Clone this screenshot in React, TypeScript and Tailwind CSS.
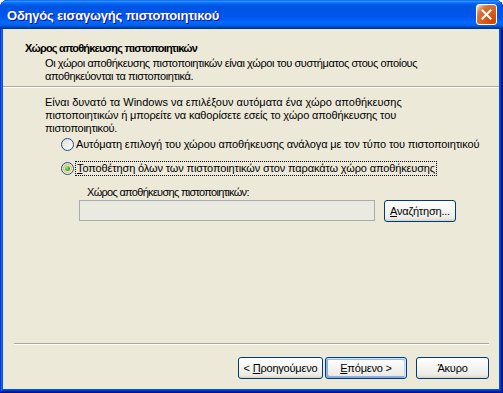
import React from "react";

const FONT = { fontFamily: '"Liberation Sans", Arial, sans-serif' };

function Radio({ checked }: { checked?: boolean }) {
  return (
    <div className="relative w-[13px] h-[13px] shrink-0 rounded-full border border-[#1c5180] bg-[linear-gradient(135deg,#dcdcd7_0%,#ffffff_100%)]">
      {checked && (
        <>
          <div className="absolute inset-[1px] rounded-full border border-[#f8b636]" />
          <div className="absolute left-[3px] top-[3px] w-[5px] h-[5px] rounded-full bg-[radial-gradient(circle_at_35%_35%,#8ef08a_0%,#21a121_70%,#0f8a0f_100%)]" />
        </>
      )}
    </div>
  );
}

function XPButton({
  children,
  w,
  isDefault,
}: {
  children: React.ReactNode;
  w: string;
  isDefault?: boolean;
}) {
  return (
    <div
      className={
        "h-[22px] flex items-center justify-center rounded-[3px] border border-[#003c74] bg-[linear-gradient(180deg,#ffffff_0%,#ecebe6_86%,#d6d0c5_100%)] text-[11px] text-black leading-none tracking-[-0.2px] " +
        w +
        (isDefault
          ? " shadow-[inset_-1px_1px_#cee7ff,inset_1px_2px_#98b8ea,inset_-2px_2px_#bcd4f6,inset_1px_-1px_#89ade4,inset_2px_-2px_#89ade4]"
          : "")
      }
    >
      {children}
    </div>
  );
}

export default function App() {
  return (
    <div
      className="w-[503px] h-[393px] flex flex-col rounded-t-[8px] overflow-hidden bg-[#0054e3] shadow-[inset_-1px_-1px_#00138c,inset_1px_1px_#0831d9,inset_-2px_-2px_#001ea0,inset_2px_2px_#166aee,inset_-3px_-3px_#003bda,inset_3px_3px_#0855dd]"
      style={FONT}
    >
      {/* Title bar */}
      <div className="h-[29px] shrink-0 flex items-center justify-between pl-[7px] pr-[6px] rounded-t-[8px] bg-[linear-gradient(180deg,#0058ee_0%,#3593ff_4%,#288eff_6%,#127dff_8%,#036ffc_10%,#0262ee_14%,#0057e5_20%,#0054e3_24%,#0055eb_56%,#005bf5_66%,#026afe_76%,#0062ef_86%,#0052d6_92%,#0040ab_94%,#003092_100%)]">
        <span className="text-white font-bold text-[13px] tracking-[-0.2px] pt-[2px] [text-shadow:1px_1px_#0f1089] whitespace-nowrap">
          Οδηγός εισαγωγής πιστοποιητικού
        </span>
        <div className="w-[21px] h-[21px] rounded-[3px] border border-white flex items-center justify-center bg-[radial-gradient(circle_at_85%_85%,#cc4600_0%,#dc6527_55%,#cd7546_70%,#ffccb2_92%,#ffffff_100%)]">
          <svg width="11" height="11" viewBox="0 0 11 11">
            <path d="M1.5 1.5 L9.5 9.5 M9.5 1.5 L1.5 9.5" stroke="white" strokeWidth="2" strokeLinecap="square" />
          </svg>
        </div>
      </div>

      {/* Client area */}
      <div className="flex-1 ml-[3px] mr-[4px] mb-[4px] bg-[#ece9d8] flex flex-col text-[11px] leading-[13px] text-black">
        {/* Header */}
        <div className="h-[57px] shrink-0 pl-[22px] pt-[13px]">
          <div className="font-bold whitespace-nowrap tracking-[-0.8px]">Χώρος αποθήκευσης πιστοποιητικών</div>
          <div className="pl-[20px] mt-[2px] whitespace-nowrap tracking-[-0.4px]">
            <div>Οι χώροι αποθήκευσης πιστοποιητικών είναι χώροι του συστήματος στους οποίους</div>
            <div>αποθηκεύονται τα πιστοποιητικά.</div>
          </div>
        </div>
        <div className="h-[2px] shrink-0 border-t border-[#aca899] border-b border-b-white" />

        {/* Body */}
        <div className="pl-[42px] pt-[8px] whitespace-nowrap">
          <div>Είναι δυνατό τα Windows να επιλέξουν αυτόματα ένα χώρο αποθήκευσης</div>
          <div className="tracking-[-0.15px]">πιστοποιητικών ή μπορείτε να καθορίσετε εσείς το χώρο αποθήκευσης του</div>
          <div className="tracking-[-0.3px]">πιστοποιητικού.</div>

          <div className="ml-[16px] mt-[3px] flex items-center gap-[2px] h-[13px] tracking-[-0.13px]">
            <Radio />
            <span>
              Αυτόματη επιλογή του <u>χ</u>ώρου αποθήκευσης ανάλογα με τον τύπο του πιστοποιητικού
            </span>
          </div>
          <div className="ml-[16px] mt-[11px] flex items-center gap-[1px] h-[13px] tracking-[-0.13px]">
            <Radio checked />
            <span className="border border-dotted border-black px-[1px] leading-[13px]">
              <u>Τ</u>οποθέτηση όλων των πιστοποιητικών στον παρακάτω χώρο αποθήκευσης
            </span>
          </div>

          <div className="ml-[42px] mt-[11px] tracking-[-0.7px]">Χώρος αποθήκευσης πιστοποιητικών:</div>
          <div className="ml-[34px] mt-[1px] flex items-start">
            <div className="w-[296px] h-[21px] border border-[#a5acb2] bg-[#ebeae0]" />
            <div className="ml-[9px]">
              <XPButton w="w-[72px]">
                <span>
                  <u>Α</u>ναζήτηση...
                </span>
              </XPButton>
            </div>
          </div>
        </div>

        <div className="flex-1" />

        {/* Bottom separator */}
        <div className="h-[2px] shrink-0 ml-[11px] mr-[10px] border-t border-[#aca899] border-b border-b-white" />

        {/* Buttons */}
        <div className="mt-[12px] mb-[10px] pr-[10px] flex justify-end">
          <XPButton w="w-[85px]">
            <span>
              &lt; <u>Π</u>ροηγούμενο
            </span>
          </XPButton>
          <div className="ml-[2px]">
            <XPButton w="w-[82px]" isDefault>
              <span>
                <u>Ε</u>πόμενο &gt;
              </span>
            </XPButton>
          </div>
          <div className="ml-[9px]">
            <XPButton w="w-[73px]">
              <span>Άκυρο</span>
            </XPButton>
          </div>
        </div>
      </div>
    </div>
  );
}
